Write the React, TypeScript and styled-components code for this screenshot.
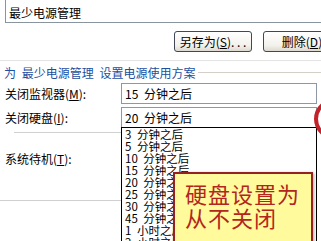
import styled, { createGlobalStyle } from "styled-components";

const Global = createGlobalStyle`
  html, body {
    margin: 0;
    padding: 0;
    background: #fff;
  }
  body {
    font-family: "Noto Sans CJK SC", "Liberation Sans", sans-serif;
    font-size: 12px;
    color: #000;
  }
`;

const Root = styled.div`
  position: relative;
  width: 321px;
  height: 241px;
  overflow: hidden;
  background: #fff;
`;

const NameField = styled.div`
  box-sizing: border-box;
  height: 24px;
  margin: -1px -8px 0 5px;
  padding: 3px 0 0 3px;
  display: flex;
  align-items: center;
  border: 1px solid #8a949e;
  white-space: nowrap;
`;

const ButtonRow = styled.div`
  display: flex;
  gap: 11px;
  margin-top: 8px;
  padding-left: 174px;
`;

const Button = styled.div`
  box-sizing: border-box;
  flex-shrink: 0;
  width: 78px;
  height: 21px;
  display: flex;
  align-items: center;
  justify-content: center;
  border: 1px solid #3f4854;
  border-radius: 3px;
  background: linear-gradient(#ffffff, #f3f2ec 70%, #dcdad0);
  white-space: pre;
`;

const Divider = styled.div`
  height: 1px;
  margin-top: 8px;
  background: #e4e4e4;
`;

const SectionHeader = styled.div`
  display: flex;
  align-items: center;
  height: 14px;
  margin-top: 4px;
  padding-left: 4px;
  color: #1c4fa0;
  white-space: nowrap;
  word-spacing: 3px;
`;

const HeaderLine = styled.div`
  flex: 1;
  height: 1px;
  margin-left: 3px;
  background: #d4d0c8;
`;

const FieldRow = styled.div<{ $gap: number }>`
  display: flex;
  align-items: center;
  height: 21px;
  margin-top: ${(p) => p.$gap}px;
`;

const Label = styled.div`
  box-sizing: border-box;
  width: 121px;
  padding-left: 5px;
  white-space: nowrap;
`;

const SelectBox = styled.div`
  position: relative;
  box-sizing: border-box;
  width: 196px;
  height: 21px;
  display: flex;
  align-items: center;
  padding-left: 3px;
  border: 1px solid #8c98a4;
  white-space: nowrap;
  word-spacing: 3px;
`;

const DropList = styled.div`
  position: absolute;
  top: 100%;
  left: -1px;
  z-index: 2;
  box-sizing: border-box;
  width: calc(100% + 2px);
  height: 130px;
  border: 1px solid #000;
  background: #fff;
`;

const DropItem = styled.div`
  height: 12px;
  font-size: 11.5px;
  line-height: 12px;
  padding-left: 3px;
  white-space: nowrap;
`;

const Rule = styled.div<{ $gap: number; $indent: number }>`
  width: ${(p) => 121 - p.$indent}px;
  height: 1px;
  margin-top: ${(p) => p.$gap}px;
  margin-left: ${(p) => p.$indent}px;
  background: #d0d0d0;
`;

const Callout = styled.div`
  position: absolute;
  left: 173px;
  top: 172px;
  z-index: 3;
  box-sizing: border-box;
  width: 140px;
  height: 90px;
  padding: 7px 0 0 10px;
  border: 2px solid #952222;
  background: #fffb9c;
  box-shadow: 1px 1px 3px rgba(0, 0, 0, 0.35);
  color: #b3261e;
  font-size: 22px;
  line-height: 24px;
  letter-spacing: 1px;
  white-space: nowrap;
`;

const Ring = styled.svg`
  position: absolute;
  left: 312px;
  top: 100px;
  z-index: 3;
`;

const options = [
  "3 分钟之后",
  "5 分钟之后",
  "10 分钟之后",
  "15 分钟之后",
  "20 分钟之后",
  "25 分钟之后",
  "30 分钟之后",
  "45 分钟之后",
  "1 小时之后",
  "2 小时之后",
];

export default function App() {
  return (
    <Root>
      <Global />
      <NameField>最少电源管理</NameField>

      <ButtonRow>
        <Button>
          另存为(<u>S</u>). . .
        </Button>
        <Button>
          删除(<u>D</u>)
        </Button>
      </ButtonRow>

      <Divider />

      <SectionHeader>
        为 最少电源管理 设置电源使用方案
        <HeaderLine />
      </SectionHeader>

      <FieldRow $gap={4}>
        <Label>
          关闭监视器(<u>M</u>):
        </Label>
        <SelectBox>15 分钟之后</SelectBox>
      </FieldRow>

      <FieldRow $gap={3}>
        <Label>
          关闭硬盘(<u>I</u>):
        </Label>
        <SelectBox>
          20 分钟之后
          <DropList>
            {options.map((o) => (
              <DropItem key={o}>{o}</DropItem>
            ))}
          </DropList>
        </SelectBox>
      </FieldRow>

      <Rule $gap={4} $indent={14} />

      <FieldRow $gap={15}>
        <Label>
          系统待机(<u>T</u>):
        </Label>
        <SelectBox>从不</SelectBox>
      </FieldRow>

      <Rule $gap={31} $indent={0} />

      <Callout>
        硬盘设置为
        <br />
        从不关闭
      </Callout>

      <Ring width="9" height="40" viewBox="0 0 9 40">
        <ellipse cx="26" cy="19" rx="22" ry="20" fill="none" stroke="#c4222b" strokeWidth="4" />
      </Ring>
    </Root>
  );
}
